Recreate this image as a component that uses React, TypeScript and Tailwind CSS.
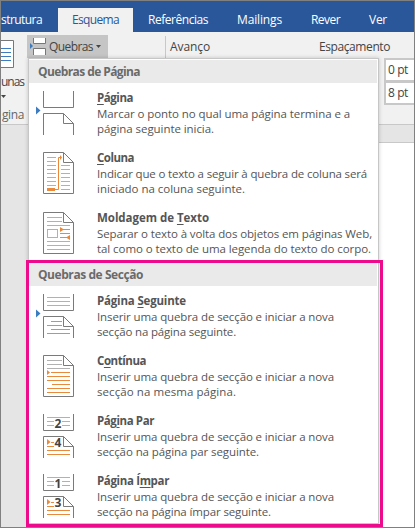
import { useLayoutEffect, useRef, useState, type ReactNode } from 'react';

// Text run whose tracking is adjusted to fill the given width.
function Fit({ w, className = '', children }: { w: number; className?: string; children: ReactNode }) {
  const ref = useRef<HTMLSpanElement>(null);
  const [tracking, setTracking] = useState(0);
  useLayoutEffect(() => {
    const el = ref.current;
    if (!el) return;
    const n = (el.textContent ?? '').length;
    setTracking((w - el.getBoundingClientRect().width) / n);
  }, [w]);
  return (
    <span className={`block ${className}`}>
      <span ref={ref} className="inline-block whitespace-nowrap" style={{ letterSpacing: tracking }}>
        {children}
      </span>
    </span>
  );
}

const G = '#7a7a7a';
const L = '#b1b1b1';
const O = '#e8893b';

function Rules({ rows, color = L }: { rows: number[][]; color?: string }) {
  return (
    <g fill={color}>
      {rows.map(([x, y, w], i) => (
        <rect key={i} x={x} y={y} width={w} height={1} />
      ))}
    </g>
  );
}

function FullPage() {
  return (
    <>
      <path d="M7.5 9.5H27.5L37.5 19.5V50.5H7.5Z" fill="#fff" stroke={G} />
      <path d="M27.5 9.5V19.5H37.5" fill="none" stroke={G} />
    </>
  );
}

function SplitPage() {
  return (
    <g fill="none" stroke={G}>
      <path d="M7.5 8V24.5H37.5V8" />
      <path d="M7.5 52V30.5H27.5L37.5 40.5V52M27.5 30.5V40.5H37.5" />
    </g>
  );
}

const BlueArrow = () => <path d="M0 23.5V31.5L4.5 27.5Z" fill="#3c7cc0" />;

function NumberedPages({ a, b }: { a: string; b: string }) {
  return (
    <>
      <SplitPage />
      <Rules rows={[[11, 11, 23], [11, 15, 7], [26, 15, 8], [11, 19, 7], [26, 19, 8]]} />
      <path d="M11 33V39L14.5 36Z" fill={O} />
      <Rules color={O} rows={[[15, 36, 3], [11, 40, 7], [11, 44, 23], [11, 48, 23]]} />
      <g fill="#444" fontFamily="'Open Sans', sans-serif" fontWeight="700" fontSize="12" textAnchor="middle">
        <text x="22" y="22">{a}</text>
        <text x="22" y="41">{b}</text>
      </g>
    </>
  );
}

const icons: Record<string, ReactNode> = {
  page: (
    <>
      <SplitPage />
      <BlueArrow />
    </>
  ),
  column: (
    <>
      <FullPage />
      <Rules rows={[14, 18, 22, 26, 30, 34, 38, 42].map((y) => [11, y, 9])} />
      <Rules rows={[22, 26, 30, 34, 38, 42, 46].map((y) => [25, y, 9])} />
      <rect x="11" y="45" width="8" height="3" fill={O} />
      <path d="M19 46.5H22.5V14.5H25" fill="none" stroke={O} />
      <path d="M24 12V17L26 14.5Z" fill={O} />
    </>
  ),
  wrap: (
    <>
      <FullPage />
      <Rules rows={[[11, 14, 15], [11, 18, 15], [11, 22, 23], [11, 38, 23], [11, 42, 23], [11, 46, 23]]} />
      <rect x="11.5" y="26.5" width="10" height="8" fill="none" stroke={L} />
      <Rules color={O} rows={[[27, 26, 7], [24, 30, 10], [24, 34, 7]]} />
      <path d="M24 24V29L28 26.5ZM34 32V37L30 34.5Z" fill={O} />
    </>
  ),
  next: (
    <>
      <SplitPage />
      <BlueArrow />
      <Rules rows={[11, 15, 19].map((y) => [11, y, 23])} />
      <Rules color={O} rows={[[15, 35, 11], [11, 39, 15], [15, 43, 19], [11, 47, 23]]} />
    </>
  ),
  continuous: (
    <>
      <FullPage />
      <Rules rows={[[11, 14, 15], [11, 18, 15], [11, 22, 23]]} />
      <path d="M11 24V29L14 26.5Z" fill={O} />
      <Rules color={O} rows={[[15, 26, 19], [11, 30, 23], [11, 34, 23], [16, 38, 18], [11, 42, 23], [11, 46, 23]]} />
    </>
  ),
  even: <NumberedPages a="2" b="4" />,
  odd: <NumberedPages a="1" b="3" />,
};

type Item = { icon: string; title: ReactNode; tw: number; lines: [string, number][] };

const U = ({ children }: { children: ReactNode }) => (
  <span className="underline decoration-1 underline-offset-2">{children}</span>
);

const pageItems: Item[] = [
  { icon: 'page', title: <><U>P</U>ágina</>, tw: 36, lines: [['Marcar o ponto no qual uma página termina e a', 253], ['página seguinte inicia.', 117]] },
  { icon: 'column', title: <><U>C</U>oluna</>, tw: 37, lines: [['Indicar que o texto a seguir à quebra de coluna será', 270], ['iniciado na coluna seguinte.', 148]] },
  { icon: 'wrap', title: <>Moldagem de <U>T</U>exto</>, tw: 112, lines: [['Separar o texto à volta dos objetos em páginas Web,', 275], ['tal como o texto de uma legenda do texto do corpo.', 274]] },
];

const first: [string, number] = ['Inserir uma quebra de secção e iniciar a nova', 237];
const sectionItems: Item[] = [
  { icon: 'next', title: <>Página <U>S</U>eguinte</>, tw: 89, lines: [first, ['secção na página seguinte.', 139]] },
  { icon: 'continuous', title: <>C<U>o</U>ntínua</>, tw: 49, lines: [first, ['secção na mesma página.', 139]] },
  { icon: 'even', title: <>Pág<U>i</U>na Par</>, tw: 57, lines: [first, ['secção na página par seguinte.', 162]] },
  { icon: 'odd', title: <>Página Í<U>m</U>par</>, tw: 72, lines: [first, ['secção na página ímpar seguinte.', 174]] },
];

function Section({ title, w, items }: { title: string; w: number; items: Item[] }) {
  return (
    <section>
      <h2 className="flex h-[23px] items-center bg-[#eaeaea] pt-px pl-[9px] text-[12px] font-bold text-[#6a6a6a]">
        <Fit w={w}>{title}</Fit>
      </h2>
      {items.map((it) => (
        <div key={it.icon} className="flex h-[60px] pl-[7px]">
          <svg width="40" height="60" className="mr-[21px] shrink-0">{icons[it.icon]}</svg>
          <div className="pt-[6px] text-[11.5px] leading-[15px] text-[#555]">
            <Fit w={it.tw} className="h-[17px] leading-[17px] font-bold text-[#555]">{it.title}</Fit>
            {it.lines.map(([t, lw]) => (
              <Fit key={t} w={lw}>{t}</Fit>
            ))}
          </div>
        </div>
      ))}
    </section>
  );
}

const Caret = () => (
  <svg width="5" height="3" className="shrink-0"><path d="M0 0H5L2.5 3Z" fill="#444" /></svg>
);

export default function App() {
  return (
    <div className="relative flex h-[528px] w-[415px] flex-col overflow-hidden border border-[#808080] bg-[#e5e5e5] font-['Open_Sans','Noto_Sans',sans-serif] text-[12px] text-[#444]">
      <nav className="flex h-[31px] shrink-0 items-end bg-[#2a579a] leading-6 text-white">
        <Fit w={41} className="w-[57px]">strutura</Fit>
        <div className="h-6 w-[75px] bg-[#f1f1f1] pl-[14px] text-[#2a579a]"><Fit w={47}>Esquema</Fit></div>
        <Fit w={60} className="ml-[15px] w-[89px]">Referências</Fit>
        <Fit w={45} className="w-[74px]">Mailings</Fit>
        <Fit w={29} className="w-[58px]">Rever</Fit>
        <Fit w={18}>Ver</Fit>
      </nav>

      <div className="flex h-[93px] shrink-0 border-b border-[#c8c8c8] bg-[#f1f1f1]">
        <div className="flex w-[26px] flex-col pt-2">
          <svg width="13" height="28" className="shrink-0">
            <path d="M0 .5H12.5V27.5H0" fill="#fff" stroke="#777" />
            <path d="M0 8.5H10M0 12.5H10M0 16.5H10M0 20.5H10" stroke="#3c7cc0" />
          </svg>
          <Fit w={23} className="mt-[5px] leading-[18px]">unas</Fit>
          <span className="mt-[4px] flex h-3"><Caret /></span>
          <Fit w={22} className="pl-px leading-[18px] text-[#666]">gina</Fit>
        </div>
        <div className="mt-[3px] flex h-[23px] w-[81px] items-center bg-[#c5c5c5] pl-[3px]">
          <svg width="16" height="17" className="mr-[3px] shrink-0">
            <path d="M3.5 0H15.5V5.5H3.5ZM3.5 10.5H15.5V17H3.5Z" fill="#fff" />
            <path d="M3.5 0V5.5H15.5V0M3.5 17V10.5H15.5V17" fill="none" stroke="#777" />
            <path d="M0 5V11L3 8Z" fill="#3c7cc0" />
          </svg>
          <Fit w={44} className="mr-[3px]">Quebras</Fit>
          <Caret />
        </div>
        <div className="mt-1 ml-[57px] h-[22px] w-px bg-[#c8c8c8]" />
        <Fit w={40} className="mt-[6px] ml-[4px] leading-[18px]">Avanço</Fit>
        <div className="ml-[109px] flex flex-col pt-[6px]">
          <Fit w={71} className="h-5 leading-[18px]">Espaçamento</Fit>
          {['0 pt', '8 pt'].map((v) => (
            <div key={v} className="-mb-px ml-[65px] flex h-6 w-[30px] items-center border-2 border-r-0 border-[#c8c8c8] bg-white pl-[2px]">
              <Fit w={20}>{v}</Fit>
            </div>
          ))}
        </div>
      </div>
      <div className="mt-[17px] ml-[378px] grow border-t border-[#c8c8c8] bg-white" />

      <div className="absolute top-[57px] left-[27px] h-[466px] w-[351px] border border-[#c6c6c6] bg-white pt-px shadow-[0_0_4px_#0003]">
        <div className="mr-px">
          <Section title="Quebras de Página" w={102} items={pageItems} />
          <Section title="Quebras de Secção" w={105} items={sectionItems} />
        </div>
      </div>
      <div className="absolute top-[259px] left-[25px] h-[267px] w-[357px] border-[3px] border-[#ee0a8c]" />
    </div>
  );
}
